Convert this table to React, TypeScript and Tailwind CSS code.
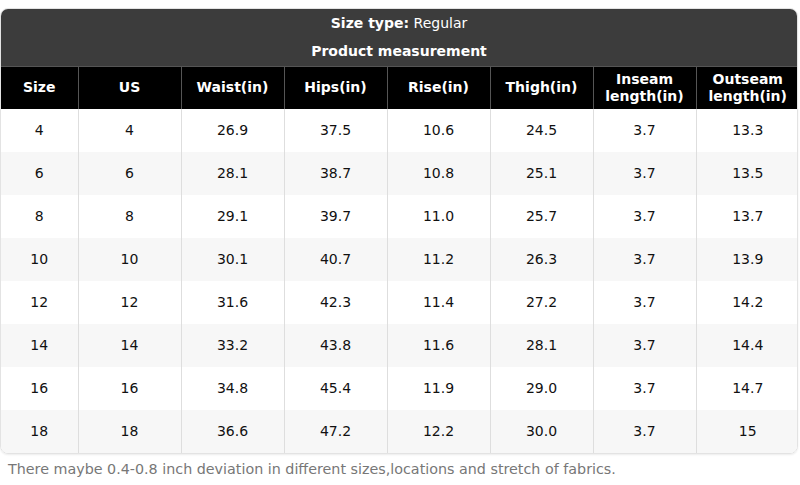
const headers = ['Size', 'US', 'Waist(in)', 'Hips(in)', 'Rise(in)', 'Thigh(in)', 'Inseam length(in)', 'Outseam length(in)'];

const rows = [
  ['4', '4', '26.9', '37.5', '10.6', '24.5', '3.7', '13.3'],
  ['6', '6', '28.1', '38.7', '10.8', '25.1', '3.7', '13.5'],
  ['8', '8', '29.1', '39.7', '11.0', '25.7', '3.7', '13.7'],
  ['10', '10', '30.1', '40.7', '11.2', '26.3', '3.7', '13.9'],
  ['12', '12', '31.6', '42.3', '11.4', '27.2', '3.7', '14.2'],
  ['14', '14', '33.2', '43.8', '11.6', '28.1', '3.7', '14.4'],
  ['16', '16', '34.8', '45.4', '11.9', '29.0', '3.7', '14.7'],
  ['18', '18', '36.6', '47.2', '12.2', '30.0', '3.7', '15'],
];

export default function App() {
  return (
    <div className="w-[800px] h-[485px] bg-white pt-[8px] font-['DejaVu_Sans',sans-serif] text-[14px]">
      <div className="w-[798px] rounded-[8px] border border-[#e3e3e3] overflow-hidden shadow-[0_1px_2px_rgba(0,0,0,0.08)]">
        <div className="bg-[#3c3c3c] text-white text-center">
          <div className="h-[28px] flex items-center justify-center">
            <span className="font-bold">Size type:</span>&nbsp;Regular
          </div>
          <div className="h-[29px] flex items-center justify-center font-bold">Product measurement</div>
        </div>
        <table className="w-full table-fixed border-collapse">
          <colgroup>
            <col className="w-[77px]" />
            {headers.slice(1).map((h) => (
              <col key={h} className="w-[103px]" />
            ))}
          </colgroup>
          <thead>
            <tr className="bg-black text-white h-[42px]">
              {headers.map((h, i) => (
                <th
                  key={h}
                  className={`font-bold text-center leading-[17px] px-1 border-t border-[#555] ${i > 0 ? 'border-l' : ''}`}
                >
                  {h}
                </th>
              ))}
            </tr>
          </thead>
          <tbody>
            {rows.map((r, ri) => (
              <tr key={ri} className={`h-[43px] ${ri % 2 === 1 ? 'bg-[#f7f7f7]' : 'bg-white'}`}>
                {r.map((c, ci) => (
                  <td
                    key={ci}
                    className={`text-center text-[#111] ${ci > 0 ? 'border-l border-[#dedede]' : ''}`}
                  >
                    {c}
                  </td>
                ))}
              </tr>
            ))}
          </tbody>
        </table>
      </div>
      <p className="mt-[5px] px-[8px] text-[#777] text-[14.3px]">
        There maybe 0.4-0.8 inch deviation in different sizes,locations and stretch of fabrics.
      </p>
    </div>
  );
}
